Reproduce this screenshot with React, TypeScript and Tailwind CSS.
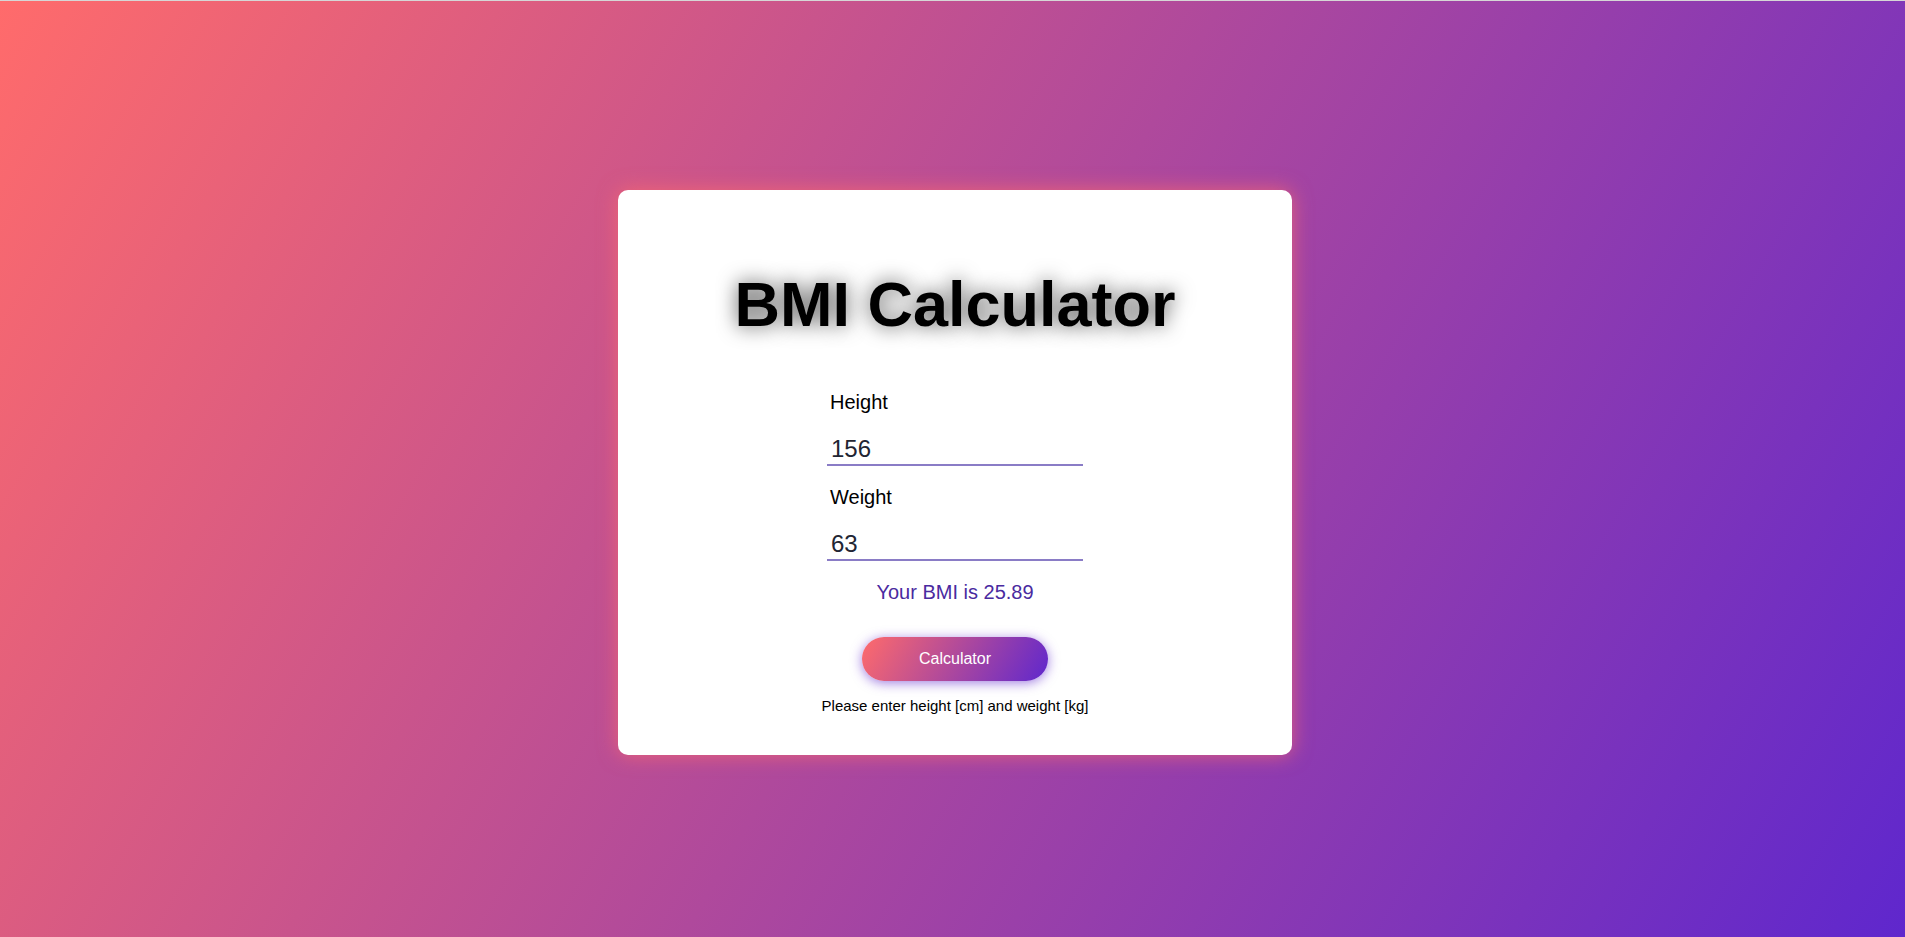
import React, { useState } from "react";

export default function App() {
  const [height, setHeight] = useState("156");
  const [weight, setWeight] = useState("63");
  const h = parseFloat(height) / 100;
  const w = parseFloat(weight);
  const bmi = h > 0 && w > 0 ? (w / (h * h)).toFixed(2) : "";

  return (
    <div
      className="w-full h-[937px] flex items-center justify-center bg-[linear-gradient(120deg,#ff6b6b,#5f27cd)] border-t border-[#d6d6d6]"
      style={{ fontFamily: '"Liberation Sans", Arial, sans-serif' }}
    >
      <div className="w-[674px] h-[565px] ml-[5px] bg-white rounded-[10px] shadow-[0_0_20px_rgba(255,107,107,0.75)] flex flex-col items-center pt-[77px] mb-[-6px]">
        <h1 className="text-[63px] font-bold leading-[74px] text-black [text-shadow:0_0_20px_rgba(0,0,0,0.7)]">
          BMI Calculator
        </h1>
        <div className="w-[256px] flex flex-col mt-[50px]">
          <label className="text-[20px] leading-[23px] text-black pl-[3px]">Height</label>
          <input
            value={height}
            onChange={(e) => setHeight(e.target.value)}
            className="mt-[20px] h-[32px] w-full text-[24px] text-[#222533] px-[4px] py-0 border-b-2 border-[#8a7cc6] outline-none bg-transparent"
            style={{ fontFamily: '"Liberation Sans", Arial, sans-serif' }}
          />
          <label className="mt-[20px] text-[20px] leading-[23px] text-black pl-[3px]">Weight</label>
          <input
            value={weight}
            onChange={(e) => setWeight(e.target.value)}
            className="mt-[20px] h-[32px] w-full text-[24px] text-[#222533] px-[4px] py-0 border-b-2 border-[#8a7cc6] outline-none bg-transparent"
            style={{ fontFamily: '"Liberation Sans", Arial, sans-serif' }}
          />
        </div>
        <p className="mt-[20px] text-[20px] leading-[23px] text-[#4a2aa0]">Your BMI is {bmi}</p>
        <button
          className="mt-[33px] w-[186px] h-[44px] rounded-full bg-[linear-gradient(120deg,#ff6b6b,#5f27cd)] text-white text-[16px] shadow-[0_2px_12px_rgba(95,39,205,0.6)]"
          style={{ fontFamily: '"Liberation Sans", Arial, sans-serif' }}
        >
          Calculator
        </button>
        <p className="mt-[16px] text-[15px] leading-[17px] text-black">
          Please enter height [cm] and weight [kg]
        </p>
      </div>
    </div>
  );
}
